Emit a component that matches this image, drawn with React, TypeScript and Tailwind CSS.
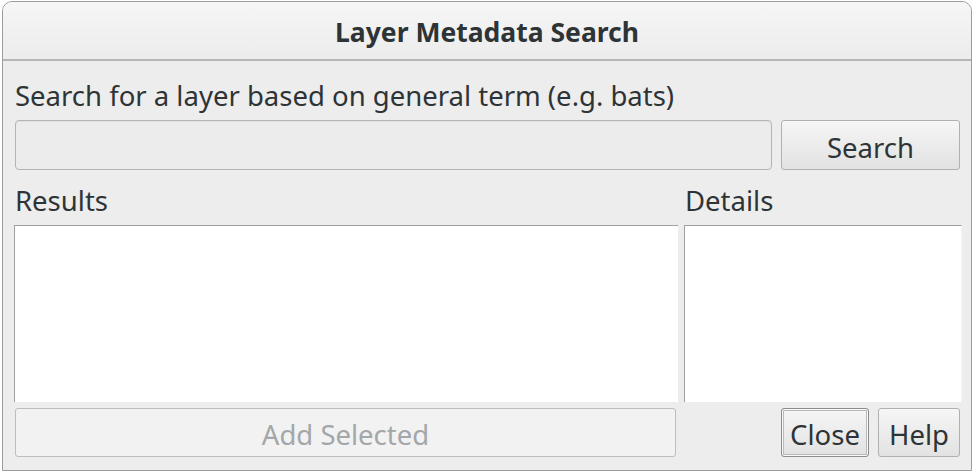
const font = { fontFamily: "'Noto Sans', 'Open Sans', sans-serif" };

function Button({
  children,
  className = "",
  focused = false,
}: {
  children: React.ReactNode;
  className?: string;
  focused?: boolean;
}) {
  return (
    <button
      className={`h-full pt-[5px] rounded-[3px] border bg-gradient-to-b from-[#f6f6f6] to-[#e2e2e2] text-[27.5px] text-[#2e3436] whitespace-nowrap ${
        focused
          ? "border-[#8c8c8c] shadow-[inset_0_0_0_1px_#fafafa,inset_0_0_0_2px_#b8b8b8]"
          : "border-[#b0b0b0]"
      } ${className}`}
    >
      {children}
    </button>
  );
}

export default function App() {
  return (
    <div className="w-[974px] h-[472px] bg-white overflow-hidden" style={font}>
      <div className="ml-[2px] mt-[1px] w-[970px] h-[470px] flex flex-col border border-[#9c9c9c] rounded-t-[10px] bg-[#ededed] overflow-hidden">
        {/* Title bar */}
        <div className="h-[59px] shrink-0 flex items-center justify-center bg-gradient-to-b from-[#f6f6f6] to-[#ececec] border-b-2 border-[#b6b6b6]">
          <span className="text-[26.5px] font-bold text-[#2e3436] mt-[5px]">
            Layer Metadata Search
          </span>
        </div>

        {/* Body */}
        <div className="flex flex-col text-[27.5px] text-[#2e3436]">
          <div className="mt-[20px] ml-[12px] h-[30px] leading-[30px] whitespace-nowrap">
            Search for a layer based on general term (e.g. bats)
          </div>

          <div className="mt-[9px] ml-[12px] mr-[11px] h-[50px] flex gap-[9px]">
            <div className="flex-1 rounded-[4px] border border-[#b4b4b4] bg-[#ececec] shadow-[inset_0_1px_1px_rgba(0,0,0,0.05)]" />
            <Button className="w-[179px]">Search</Button>
          </div>

          <div className="mt-[16px] h-[30px] leading-[30px] flex">
            <div className="ml-[12px] w-[670px]">Results</div>
            <div>Details</div>
          </div>

          <div className="mt-[9px] ml-[11px] h-[177px] flex gap-[6px]">
            <div className="w-[664px] bg-white border-t border-l border-[#a0a0a0]" />
            <div className="w-[278px] bg-white border-t border-l border-[#a0a0a0] border-r border-r-[#f4f4f4]" />
          </div>

          <div className="mt-[6px] ml-[12px] mr-[11px] h-[49px] flex">
            <button className="w-[661px] h-full pt-[5px] rounded-[3px] border border-[#bdbdbd] bg-[#f2f2f2] text-[27.5px] text-[#a3a7a9]">
              Add Selected
            </button>
            <div className="flex-1" />
            <Button className="w-[88px]" focused>
              Close
            </Button>
            <Button className="w-[82px] ml-[9px]">Help</Button>
          </div>
        </div>
      </div>
    </div>
  );
}
